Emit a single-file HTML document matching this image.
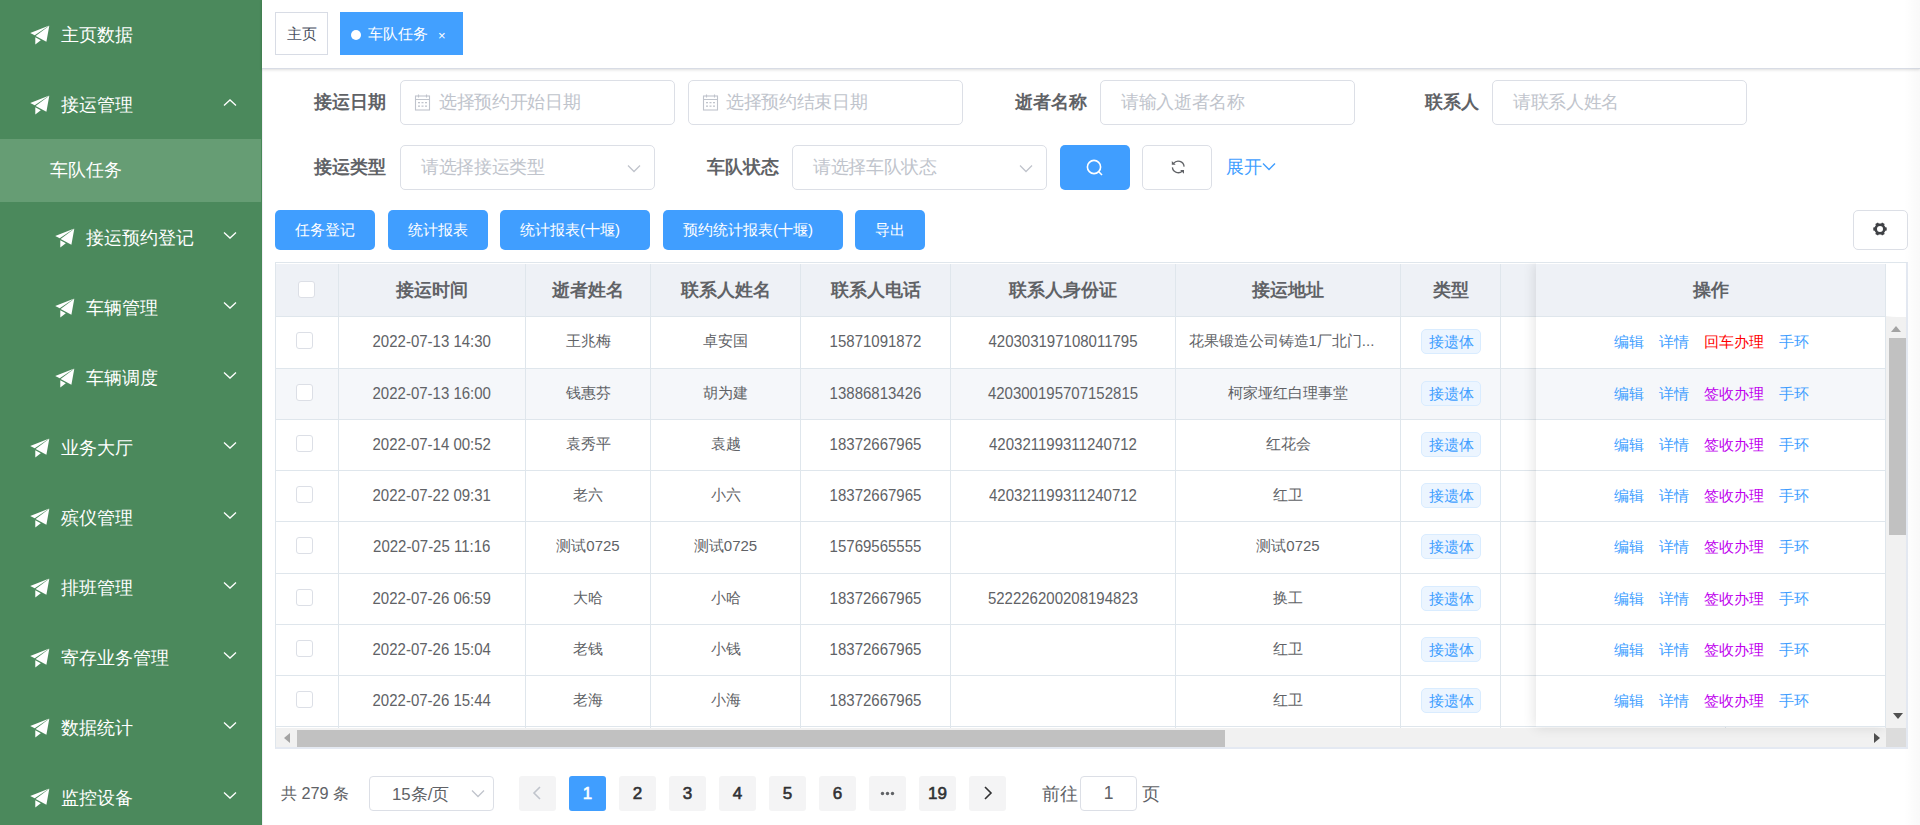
<!DOCTYPE html>
<html><head><meta charset="utf-8">
<style>
*{box-sizing:border-box;margin:0;padding:0}
html,body{width:1920px;height:825px;overflow:hidden;background:#fff;font-family:"Liberation Sans",sans-serif;color:#606266}
.abs{position:absolute}
#side{position:absolute;left:0;top:0;width:262px;height:825px;background:#4b895c}
.mi{position:absolute;left:0;width:262px;height:70px;color:#fff;font-size:17.5px;line-height:70px}
.mi svg.pl{position:absolute;top:25px}
.mi .t{position:absolute;top:0}
.mi svg.ch{position:absolute;left:223px;top:28.5px}
#sub{position:absolute;left:0;top:139px;width:261px;height:62.5px;background:#669d74;color:#fff;font-size:17.5px;line-height:62.5px}
#hdr{position:absolute;left:262px;top:0;width:1658px;height:69px;background:#fff;border-bottom:1px solid #d8dce5;box-shadow:0 1px 3px 0 rgba(0,0,0,.12),0 0 3px 0 rgba(0,0,0,.04);z-index:2}
.tag{position:absolute;top:12px;height:43px;font-size:15px;line-height:41px}
.lbl{position:absolute;font-size:17.5px;font-weight:bold;color:#606266;line-height:45px;height:45px;text-align:right;white-space:nowrap}
.inp{position:absolute;height:45px;border:1px solid #dcdfe6;border-radius:5px;background:#fff;font-size:17.5px;letter-spacing:-0.35px;color:#c0c4cc;line-height:43px;white-space:nowrap}
.inp span{position:absolute;top:0}
.inp svg{position:absolute}
.btn{position:absolute;top:210px;height:40px;background:#409eff;color:#fff;border-radius:5px;font-size:15px;line-height:40px;text-align:center;white-space:nowrap}
#tbl{position:absolute;left:275px;top:262px;width:1633px;height:487px;border:2px solid #dfe6ec;border-width:1px 2px 2px 1px;border-right-color:#e4e9f2;border-bottom-color:#e4e9f2;overflow:hidden;background:#fff}
.hline{position:absolute;height:1px;background:#dfe6ec}
.vline{position:absolute;width:1px;background:#dfe6ec}
.th{position:absolute;top:1px;height:52px;line-height:52px;font-size:17.5px;font-weight:bold;color:#606266;text-align:center;white-space:nowrap}
.td{position:absolute;font-size:15px;color:#606266;text-align:center;white-space:nowrap;line-height:20px}
.dt{transform:scaleY(1.12)}
.cb{position:absolute;width:17px;height:17px;border:1px solid #dcdfe6;border-radius:3px;background:#fff}
.etag{position:absolute;width:60px;height:25px;border:1px solid #d9ecff;background:#ecf5ff;color:#409eff;border-radius:5px;font-size:15px;line-height:23px;text-align:center}
.op{position:absolute;font-size:15px;line-height:20px;white-space:nowrap}
.pg{position:absolute;top:776px;width:37px;height:35px;background:#f4f4f5;border-radius:3px;font-size:17px;-webkit-text-stroke:0.6px currentColor;color:#303133;text-align:center;line-height:35px}
</style></head><body>
<div id="side">
<div class="mi" style="top:0px"><svg class="pl" style="left:30px" width="20" height="20" viewBox="0 0 20 20"><path fill="#fff" d="M0.2 7.9L19.3 0.4L4.7 10.3ZM19.3 0.7L16.4 16.7L5.6 11ZM5.3 12.3L5.3 19.6L10.8 15.2Z"/></svg><span class="t" style="left:61px">主页数据</span></div>
<div class="mi" style="top:70px"><svg class="pl" style="left:30px" width="20" height="20" viewBox="0 0 20 20"><path fill="#fff" d="M0.2 7.9L19.3 0.4L4.7 10.3ZM19.3 0.7L16.4 16.7L5.6 11ZM5.3 12.3L5.3 19.6L10.8 15.2Z"/></svg><span class="t" style="left:61px">接运管理</span><svg class="ch" width="14" height="8" viewBox="0 0 14 8"><path d="M1 6.5L7 1L13 6.5" fill="none" stroke="#fff" stroke-width="1.3"/></svg></div>
<div id="sub"><span class="abs" style="left:50px">车队任务</span></div>
<div class="mi" style="top:202.5px"><svg class="pl" style="left:55px" width="20" height="20" viewBox="0 0 20 20"><path fill="#fff" d="M0.2 7.9L19.3 0.4L4.7 10.3ZM19.3 0.7L16.4 16.7L5.6 11ZM5.3 12.3L5.3 19.6L10.8 15.2Z"/></svg><span class="t" style="left:86px">接运预约登记</span><svg class="ch" width="14" height="8" viewBox="0 0 14 8"><path d="M1 1.5L7 7L13 1.5" fill="none" stroke="#fff" stroke-width="1.3"/></svg></div>
<div class="mi" style="top:272.5px"><svg class="pl" style="left:55px" width="20" height="20" viewBox="0 0 20 20"><path fill="#fff" d="M0.2 7.9L19.3 0.4L4.7 10.3ZM19.3 0.7L16.4 16.7L5.6 11ZM5.3 12.3L5.3 19.6L10.8 15.2Z"/></svg><span class="t" style="left:86px">车辆管理</span><svg class="ch" width="14" height="8" viewBox="0 0 14 8"><path d="M1 1.5L7 7L13 1.5" fill="none" stroke="#fff" stroke-width="1.3"/></svg></div>
<div class="mi" style="top:342.5px"><svg class="pl" style="left:55px" width="20" height="20" viewBox="0 0 20 20"><path fill="#fff" d="M0.2 7.9L19.3 0.4L4.7 10.3ZM19.3 0.7L16.4 16.7L5.6 11ZM5.3 12.3L5.3 19.6L10.8 15.2Z"/></svg><span class="t" style="left:86px">车辆调度</span><svg class="ch" width="14" height="8" viewBox="0 0 14 8"><path d="M1 1.5L7 7L13 1.5" fill="none" stroke="#fff" stroke-width="1.3"/></svg></div>
<div class="mi" style="top:412.5px"><svg class="pl" style="left:30px" width="20" height="20" viewBox="0 0 20 20"><path fill="#fff" d="M0.2 7.9L19.3 0.4L4.7 10.3ZM19.3 0.7L16.4 16.7L5.6 11ZM5.3 12.3L5.3 19.6L10.8 15.2Z"/></svg><span class="t" style="left:61px">业务大厅</span><svg class="ch" width="14" height="8" viewBox="0 0 14 8"><path d="M1 1.5L7 7L13 1.5" fill="none" stroke="#fff" stroke-width="1.3"/></svg></div>
<div class="mi" style="top:482.5px"><svg class="pl" style="left:30px" width="20" height="20" viewBox="0 0 20 20"><path fill="#fff" d="M0.2 7.9L19.3 0.4L4.7 10.3ZM19.3 0.7L16.4 16.7L5.6 11ZM5.3 12.3L5.3 19.6L10.8 15.2Z"/></svg><span class="t" style="left:61px">殡仪管理</span><svg class="ch" width="14" height="8" viewBox="0 0 14 8"><path d="M1 1.5L7 7L13 1.5" fill="none" stroke="#fff" stroke-width="1.3"/></svg></div>
<div class="mi" style="top:552.5px"><svg class="pl" style="left:30px" width="20" height="20" viewBox="0 0 20 20"><path fill="#fff" d="M0.2 7.9L19.3 0.4L4.7 10.3ZM19.3 0.7L16.4 16.7L5.6 11ZM5.3 12.3L5.3 19.6L10.8 15.2Z"/></svg><span class="t" style="left:61px">排班管理</span><svg class="ch" width="14" height="8" viewBox="0 0 14 8"><path d="M1 1.5L7 7L13 1.5" fill="none" stroke="#fff" stroke-width="1.3"/></svg></div>
<div class="mi" style="top:622.5px"><svg class="pl" style="left:30px" width="20" height="20" viewBox="0 0 20 20"><path fill="#fff" d="M0.2 7.9L19.3 0.4L4.7 10.3ZM19.3 0.7L16.4 16.7L5.6 11ZM5.3 12.3L5.3 19.6L10.8 15.2Z"/></svg><span class="t" style="left:61px">寄存业务管理</span><svg class="ch" width="14" height="8" viewBox="0 0 14 8"><path d="M1 1.5L7 7L13 1.5" fill="none" stroke="#fff" stroke-width="1.3"/></svg></div>
<div class="mi" style="top:692.5px"><svg class="pl" style="left:30px" width="20" height="20" viewBox="0 0 20 20"><path fill="#fff" d="M0.2 7.9L19.3 0.4L4.7 10.3ZM19.3 0.7L16.4 16.7L5.6 11ZM5.3 12.3L5.3 19.6L10.8 15.2Z"/></svg><span class="t" style="left:61px">数据统计</span><svg class="ch" width="14" height="8" viewBox="0 0 14 8"><path d="M1 1.5L7 7L13 1.5" fill="none" stroke="#fff" stroke-width="1.3"/></svg></div>
<div class="mi" style="top:762.5px"><svg class="pl" style="left:30px" width="20" height="20" viewBox="0 0 20 20"><path fill="#fff" d="M0.2 7.9L19.3 0.4L4.7 10.3ZM19.3 0.7L16.4 16.7L5.6 11ZM5.3 12.3L5.3 19.6L10.8 15.2Z"/></svg><span class="t" style="left:61px">监控设备</span><svg class="ch" width="14" height="8" viewBox="0 0 14 8"><path d="M1 1.5L7 7L13 1.5" fill="none" stroke="#fff" stroke-width="1.3"/></svg></div>
<div class="abs" style="left:261px;top:0;width:1px;height:825px;background:#478857"></div>
</div>
<div id="hdr">
<div class="tag" style="left:13px;width:53px;border:1px solid #d8dce5;color:#495060;text-align:center">主页</div>
<div class="tag" style="left:78px;width:123px;background:#42a0ff;color:#fff"><span class="abs" style="left:11px;top:18px;width:10px;height:10px;border-radius:50%;background:#fff"></span><span class="abs" style="left:28px;top:0;line-height:43px">车队任务</span><span class="abs" style="left:98px;top:2px;line-height:43px;font-size:13px">×</span></div>
</div>
<div class="lbl" style="left:286px;top:80px;width:100px">接运日期</div>
<div class="inp" style="left:400px;top:80px;width:275px"><svg style="left:13px;top:13px" width="17" height="17" viewBox="0 0 17 17"><g fill="none" stroke="#c0c4cc" stroke-width="1.1"><rect x="1.5" y="2" width="14" height="14"/><path d="M1.5 5.5H15.5M4.5 0.5V3.5M12.5 0.5V3.5"/></g><g fill="#c0c4cc"><rect x="4" y="8" width="2" height="1.3"/><rect x="7.5" y="8" width="2" height="1.3"/><rect x="11" y="8" width="2" height="1.3"/><rect x="4" y="11.5" width="2" height="1.3"/><rect x="7.5" y="11.5" width="2" height="1.3"/><rect x="11" y="11.5" width="2" height="1.3"/></g></svg><span style="left:38px">选择预约开始日期</span></div>
<div class="inp" style="left:688px;top:80px;width:275px"><svg style="left:13px;top:13px" width="17" height="17" viewBox="0 0 17 17"><g fill="none" stroke="#c0c4cc" stroke-width="1.1"><rect x="1.5" y="2" width="14" height="14"/><path d="M1.5 5.5H15.5M4.5 0.5V3.5M12.5 0.5V3.5"/></g><g fill="#c0c4cc"><rect x="4" y="8" width="2" height="1.3"/><rect x="7.5" y="8" width="2" height="1.3"/><rect x="11" y="8" width="2" height="1.3"/><rect x="4" y="11.5" width="2" height="1.3"/><rect x="7.5" y="11.5" width="2" height="1.3"/><rect x="11" y="11.5" width="2" height="1.3"/></g></svg><span style="left:37px">选择预约结束日期</span></div>
<div class="lbl" style="left:986.5px;top:80px;width:100px">逝者名称</div>
<div class="inp" style="left:1100px;top:80px;width:255px"><span style="left:20px">请输入逝者名称</span></div>
<div class="lbl" style="left:1378.5px;top:80px;width:100px">联系人</div>
<div class="inp" style="left:1492px;top:80px;width:255px"><span style="left:20px">请联系人姓名</span></div>
<div class="lbl" style="left:286px;top:145px;width:100px">接运类型</div>
<div class="inp" style="left:400px;top:145px;width:255px"><span style="left:20px">请选择接运类型</span><svg style="left:226px;top:18px" width="14" height="9" viewBox="0 0 14 9"><path d="M1 1.5L7 7.5L13 1.5" fill="none" stroke="#c0c4cc" stroke-width="1.3"/></svg></div>
<div class="lbl" style="left:679px;top:145px;width:100px">车队状态</div>
<div class="inp" style="left:792px;top:145px;width:255px"><span style="left:20px">请选择车队状态</span><svg style="left:226px;top:18px" width="14" height="9" viewBox="0 0 14 9"><path d="M1 1.5L7 7.5L13 1.5" fill="none" stroke="#c0c4cc" stroke-width="1.3"/></svg></div>
<div class="abs" style="left:1060px;top:145px;width:70px;height:45px;background:#409eff;border-radius:5px"><svg class="abs" style="left:26px;top:14px" width="18" height="18" viewBox="0 0 18 18"><circle cx="8" cy="8" r="6.6" fill="none" stroke="#fff" stroke-width="1.6"/><path d="M12.8 12.8L16 16" stroke="#fff" stroke-width="1.6"/></svg></div>
<div class="abs" style="left:1142px;top:145px;width:70px;height:45px;border:1px solid #dcdfe6;border-radius:5px;background:#fff"><svg class="abs" style="left:27.5px;top:14px" width="15" height="15" viewBox="0 0 15 15"><g fill="none" stroke="#606266" stroke-width="1.3"><path d="M2.6 3.4A5.9 5.9 0 0 1 13.1 6.6"/><path d="M1.4 7.4A5.9 5.9 0 0 0 11.4 11"/></g><path d="M0.8 0.9V4.8H4.7Z" fill="#606266"/><path d="M9.1 10H13V13.8Z" fill="#606266"/></svg></div>
<div class="abs" style="left:1226px;top:145px;height:45px;line-height:45px;font-size:17.5px;color:#409eff;white-space:nowrap">展开<svg style="vertical-align:middle;margin-left:0px;margin-top:-3px" width="14" height="9" viewBox="0 0 14 9"><path d="M1 1.5L7 7.5L13 1.5" fill="none" stroke="#409eff" stroke-width="1.4"/></svg></div>
<div class="btn" style="left:275px;width:100px;padding-right:0px">任务登记</div>
<div class="btn" style="left:388px;width:100px;padding-right:0px">统计报表</div>
<div class="btn" style="left:500px;width:150px;padding-right:10px">统计报表(十堰)</div>
<div class="btn" style="left:663px;width:180px;padding-right:10px">预约统计报表(十堰)</div>
<div class="btn" style="left:855px;width:70px;padding-right:0px">导出</div>
<div class="abs" style="left:1853px;top:210px;width:55px;height:40px;border:1px solid #dcdfe6;border-radius:5px;background:#fff"><svg class="abs" style="left:19px;top:11px" width="14" height="14" viewBox="0 0 14 14"><path fill="#404246" fill-rule="evenodd" d="M11.85 4.20L12.36 5.36L13.72 5.45L13.72 8.55L12.36 8.64L11.85 9.80L11.10 10.82L11.71 12.05L9.02 13.60L8.26 12.46L7.00 12.60L5.74 12.46L4.98 13.60L2.29 12.05L2.90 10.82L2.15 9.80L1.64 8.64L0.28 8.55L0.28 5.45L1.64 5.36L2.15 4.20L2.90 3.18L2.29 1.95L4.98 0.40L5.74 1.54L7.00 1.40L8.26 1.54L9.02 0.40L11.71 1.95L11.10 3.18ZM10 7A3 3 0 1 0 4 7A3 3 0 1 0 10 7Z"/></svg></div>
<div id="tbl">
<div class="abs" style="left:0;top:1px;width:1610px;height:52px;background:#eef1f6"></div>
<div class="abs" style="left:0;top:106px;width:1610px;height:50px;background:#f5f7fa"></div>
<div class="vline" style="left:62px;top:1px;height:464px"></div>
<div class="vline" style="left:249px;top:1px;height:464px"></div>
<div class="vline" style="left:374px;top:1px;height:464px"></div>
<div class="vline" style="left:524px;top:1px;height:464px"></div>
<div class="vline" style="left:674px;top:1px;height:464px"></div>
<div class="vline" style="left:899px;top:1px;height:464px"></div>
<div class="vline" style="left:1124px;top:1px;height:464px"></div>
<div class="vline" style="left:1224px;top:1px;height:464px"></div>
<div class="vline" style="left:1449px;top:1px;height:464px"></div>
<div class="hline" style="left:0;top:53px;width:1610px"></div>
<div class="hline" style="left:0;top:105px;width:1610px"></div>
<div class="hline" style="left:0;top:156px;width:1610px"></div>
<div class="hline" style="left:0;top:207px;width:1610px"></div>
<div class="hline" style="left:0;top:258px;width:1610px"></div>
<div class="hline" style="left:0;top:310px;width:1610px"></div>
<div class="hline" style="left:0;top:361px;width:1610px"></div>
<div class="hline" style="left:0;top:412px;width:1610px"></div>
<div class="hline" style="left:0;top:463px;width:1610px"></div>
<div class="th" style="left:62px;width:187.5px">接运时间</div>
<div class="th" style="left:249.5px;width:125.0px">逝者姓名</div>
<div class="th" style="left:374.5px;width:150.0px">联系人姓名</div>
<div class="th" style="left:524.5px;width:150.0px">联系人电话</div>
<div class="th" style="left:674.5px;width:225.0px">联系人身份证</div>
<div class="th" style="left:899.5px;width:225.0px">接运地址</div>
<div class="th" style="left:1124.5px;width:100.0px">类型</div>
<div class="cb" style="left:22px;top:18px"></div>
<div class="cb" style="left:20px;top:68.5px"></div>
<div class="td dt" style="left:62px;width:187.5px;top:68px">2022-07-13 14:30</div>
<div class="td" style="left:249.5px;width:125.0px;top:68px">王兆梅</div>
<div class="td" style="left:374.5px;width:150.0px;top:68px">卓安国</div>
<div class="td dt" style="left:524.5px;width:150.0px;top:68px">15871091872</div>
<div class="td dt" style="left:674.5px;width:225.0px;top:68px">420303197108011795</div>
<div class="td" style="left:912.5px;top:68px;text-align:left">花果锻造公司铸造1厂北门...</div>
<div class="etag" style="left:1145px;top:65.5px">接遗体</div>
<div class="cb" style="left:20px;top:120.5px"></div>
<div class="td dt" style="left:62px;width:187.5px;top:120px">2022-07-13 16:00</div>
<div class="td" style="left:249.5px;width:125.0px;top:120px">钱惠芬</div>
<div class="td" style="left:374.5px;width:150.0px;top:120px">胡为建</div>
<div class="td dt" style="left:524.5px;width:150.0px;top:120px">13886813426</div>
<div class="td dt" style="left:674.5px;width:225.0px;top:120px">420300195707152815</div>
<div class="td" style="left:899.5px;width:225.0px;top:120px">柯家垭红白理事堂</div>
<div class="etag" style="left:1145px;top:117.5px">接遗体</div>
<div class="cb" style="left:20px;top:171.5px"></div>
<div class="td dt" style="left:62px;width:187.5px;top:171px">2022-07-14 00:52</div>
<div class="td" style="left:249.5px;width:125.0px;top:171px">袁秀平</div>
<div class="td" style="left:374.5px;width:150.0px;top:171px">袁越</div>
<div class="td dt" style="left:524.5px;width:150.0px;top:171px">18372667965</div>
<div class="td dt" style="left:674.5px;width:225.0px;top:171px">420321199311240712</div>
<div class="td" style="left:899.5px;width:225.0px;top:171px">红花会</div>
<div class="etag" style="left:1145px;top:168.5px">接遗体</div>
<div class="cb" style="left:20px;top:222.5px"></div>
<div class="td dt" style="left:62px;width:187.5px;top:222px">2022-07-22 09:31</div>
<div class="td" style="left:249.5px;width:125.0px;top:222px">老六</div>
<div class="td" style="left:374.5px;width:150.0px;top:222px">小六</div>
<div class="td dt" style="left:524.5px;width:150.0px;top:222px">18372667965</div>
<div class="td dt" style="left:674.5px;width:225.0px;top:222px">420321199311240712</div>
<div class="td" style="left:899.5px;width:225.0px;top:222px">红卫</div>
<div class="etag" style="left:1145px;top:219.5px">接遗体</div>
<div class="cb" style="left:20px;top:273.5px"></div>
<div class="td dt" style="left:62px;width:187.5px;top:273px">2022-07-25 11:16</div>
<div class="td" style="left:249.5px;width:125.0px;top:273px">测试0725</div>
<div class="td" style="left:374.5px;width:150.0px;top:273px">测试0725</div>
<div class="td dt" style="left:524.5px;width:150.0px;top:273px">15769565555</div>
<div class="td" style="left:899.5px;width:225.0px;top:273px">测试0725</div>
<div class="etag" style="left:1145px;top:270.5px">接遗体</div>
<div class="cb" style="left:20px;top:325.5px"></div>
<div class="td dt" style="left:62px;width:187.5px;top:325px">2022-07-26 06:59</div>
<div class="td" style="left:249.5px;width:125.0px;top:325px">大哈</div>
<div class="td" style="left:374.5px;width:150.0px;top:325px">小哈</div>
<div class="td dt" style="left:524.5px;width:150.0px;top:325px">18372667965</div>
<div class="td dt" style="left:674.5px;width:225.0px;top:325px">522226200208194823</div>
<div class="td" style="left:899.5px;width:225.0px;top:325px">换工</div>
<div class="etag" style="left:1145px;top:322.5px">接遗体</div>
<div class="cb" style="left:20px;top:376.5px"></div>
<div class="td dt" style="left:62px;width:187.5px;top:376px">2022-07-26 15:04</div>
<div class="td" style="left:249.5px;width:125.0px;top:376px">老钱</div>
<div class="td" style="left:374.5px;width:150.0px;top:376px">小钱</div>
<div class="td dt" style="left:524.5px;width:150.0px;top:376px">18372667965</div>
<div class="td" style="left:899.5px;width:225.0px;top:376px">红卫</div>
<div class="etag" style="left:1145px;top:373.5px">接遗体</div>
<div class="cb" style="left:20px;top:427.5px"></div>
<div class="td dt" style="left:62px;width:187.5px;top:427px">2022-07-26 15:44</div>
<div class="td" style="left:249.5px;width:125.0px;top:427px">老海</div>
<div class="td" style="left:374.5px;width:150.0px;top:427px">小海</div>
<div class="td dt" style="left:524.5px;width:150.0px;top:427px">18372667965</div>
<div class="td" style="left:899.5px;width:225.0px;top:427px">红卫</div>
<div class="etag" style="left:1145px;top:424.5px">接遗体</div>
<div class="abs" style="left:0;top:465px;width:1610px;height:19px;background:#f1f1f1"></div>
<div class="abs" style="left:21px;top:467px;width:928px;height:17px;background:#c1c1c1"></div>
<svg class="abs" style="left:8px;top:470px" width="6" height="10" viewBox="0 0 6 10"><path d="M6 0L0 5L6 10Z" fill="#a3a3a3"/></svg>
<div class="abs" style="left:1259.7px;top:0;width:350px;height:464px;background:#fff;box-shadow:-1px 0 12px rgba(0,0,0,.12)"></div>
<div class="abs" style="left:1259.7px;top:0;width:350px;height:464px;background:#fff;overflow:hidden">
<div class="abs" style="left:0;top:1px;width:350px;height:52px;background:#eef1f6"></div>
<div class="abs" style="left:0;top:106px;width:350px;height:50px;background:#f5f7fa"></div>
<div class="hline" style="left:0;top:53px;width:350px"></div>
<div class="hline" style="left:0;top:105px;width:350px"></div>
<div class="hline" style="left:0;top:156px;width:350px"></div>
<div class="hline" style="left:0;top:207px;width:350px"></div>
<div class="hline" style="left:0;top:258px;width:350px"></div>
<div class="hline" style="left:0;top:310px;width:350px"></div>
<div class="hline" style="left:0;top:361px;width:350px"></div>
<div class="hline" style="left:0;top:412px;width:350px"></div>
<div class="hline" style="left:0;top:463px;width:350px"></div>
<div class="th" style="left:0;width:350px">操作</div>
<div class="op" style="left:78.05px;top:69px;color:#409eff">编辑</div>
<div class="op" style="left:123.05px;top:69px;color:#409eff">详情</div>
<div class="op" style="left:168.05px;top:69px;color:#f00">回车办理</div>
<div class="op" style="left:243.05px;top:69px;color:#409eff">手环</div>
<div class="op" style="left:78.05px;top:121px;color:#409eff">编辑</div>
<div class="op" style="left:123.05px;top:121px;color:#409eff">详情</div>
<div class="op" style="left:168.05px;top:121px;color:#c000ee">签收办理</div>
<div class="op" style="left:243.05px;top:121px;color:#409eff">手环</div>
<div class="op" style="left:78.05px;top:172px;color:#409eff">编辑</div>
<div class="op" style="left:123.05px;top:172px;color:#409eff">详情</div>
<div class="op" style="left:168.05px;top:172px;color:#c000ee">签收办理</div>
<div class="op" style="left:243.05px;top:172px;color:#409eff">手环</div>
<div class="op" style="left:78.05px;top:223px;color:#409eff">编辑</div>
<div class="op" style="left:123.05px;top:223px;color:#409eff">详情</div>
<div class="op" style="left:168.05px;top:223px;color:#c000ee">签收办理</div>
<div class="op" style="left:243.05px;top:223px;color:#409eff">手环</div>
<div class="op" style="left:78.05px;top:274px;color:#409eff">编辑</div>
<div class="op" style="left:123.05px;top:274px;color:#409eff">详情</div>
<div class="op" style="left:168.05px;top:274px;color:#c000ee">签收办理</div>
<div class="op" style="left:243.05px;top:274px;color:#409eff">手环</div>
<div class="op" style="left:78.05px;top:326px;color:#409eff">编辑</div>
<div class="op" style="left:123.05px;top:326px;color:#409eff">详情</div>
<div class="op" style="left:168.05px;top:326px;color:#c000ee">签收办理</div>
<div class="op" style="left:243.05px;top:326px;color:#409eff">手环</div>
<div class="op" style="left:78.05px;top:377px;color:#409eff">编辑</div>
<div class="op" style="left:123.05px;top:377px;color:#409eff">详情</div>
<div class="op" style="left:168.05px;top:377px;color:#c000ee">签收办理</div>
<div class="op" style="left:243.05px;top:377px;color:#409eff">手环</div>
<div class="op" style="left:78.05px;top:428px;color:#409eff">编辑</div>
<div class="op" style="left:123.05px;top:428px;color:#409eff">详情</div>
<div class="op" style="left:168.05px;top:428px;color:#c000ee">签收办理</div>
<div class="op" style="left:243.05px;top:428px;color:#409eff">手环</div>
</div>
<div class="vline" style="left:1609px;top:1px;height:464px"></div>
<div class="abs" style="left:1610px;top:72px;width:1px;height:12px;background:#8b5a83"></div>
<div class="abs" style="left:1610px;top:123px;width:1px;height:12px;background:#8b5a83"></div>
<div class="abs" style="left:1610px;top:226px;width:1px;height:13px;background:repeating-linear-gradient(#666 0 1px,transparent 1px 2px)"></div>
<div class="abs" style="left:1610px;top:328px;width:1px;height:1px;background:#666"></div>
<div class="abs" style="left:1610px;top:333px;width:1px;height:1px;background:#666"></div>
<div class="abs" style="left:1610px;top:339px;width:1px;height:1px;background:#666"></div>
<div class="abs" style="left:1609.5px;top:0;width:21px;height:53px;background:#fff"></div>
<div class="abs" style="left:1610px;top:54px;width:20px;height:411px;background:#f1f1f1"></div>
<div class="abs" style="left:1613px;top:75px;width:17px;height:197px;background:#c1c1c1"></div>
<svg class="abs" style="left:1615px;top:63px" width="10" height="6" viewBox="0 0 10 6"><path d="M0 6L5 0L10 6Z" fill="#a3a3a3"/></svg>
<svg class="abs" style="left:1616.5px;top:450px" width="10" height="6" viewBox="0 0 10 6"><path d="M0 0L5 6L10 0Z" fill="#505050"/></svg>
<svg class="abs" style="left:1598px;top:470px" width="6" height="10" viewBox="0 0 6 10"><path d="M0 0L6 5L0 10Z" fill="#505050"/></svg>
<div class="abs" style="left:1610px;top:465px;width:20px;height:19px;background:#dcdcdc"></div>
</div>
<div class="abs" style="left:281px;top:776px;height:34px;line-height:34px;font-size:16.25px;color:#606266;white-space:nowrap">共 279 条</div>
<div class="abs" style="left:369px;top:776px;width:125px;height:35px;border:1px solid #dcdfe6;border-radius:4px;line-height:33px;font-size:16.8px;color:#606266;white-space:nowrap"><span class="abs" style="left:22px;top:1px">15条/页</span><svg class="abs" style="left:101px;top:12px" width="14" height="9" viewBox="0 0 14 9"><path d="M1 1.5L7 7.5L13 1.5" fill="none" stroke="#c0c4cc" stroke-width="1.3"/></svg></div>
<div class="pg" style="left:519px"><svg class="abs" style="left:13px;top:10px" width="10" height="14" viewBox="0 0 10 14"><path d="M8 1L2 7L8 13" fill="none" stroke="#c0c4cc" stroke-width="1.6"/></svg></div>
<div class="pg" style="left:569px;background:#409eff;color:#fff;">1</div>
<div class="pg" style="left:619px;">2</div>
<div class="pg" style="left:669px;">3</div>
<div class="pg" style="left:719px;">4</div>
<div class="pg" style="left:769px;">5</div>
<div class="pg" style="left:819px;">6</div>
<div class="pg" style="left:869px;"><svg class="abs" style="left:11px;top:15px" width="16" height="5" viewBox="0 0 16 5"><circle cx="2.5" cy="2.5" r="1.7" fill="#606266"/><circle cx="7.5" cy="2.5" r="1.7" fill="#606266"/><circle cx="12.5" cy="2.5" r="1.7" fill="#606266"/></svg></div>
<div class="pg" style="left:919px;">19</div>
<div class="pg" style="left:969px"><svg class="abs" style="left:14px;top:10px" width="10" height="14" viewBox="0 0 10 14"><path d="M2 1L8 7L2 13" fill="none" stroke="#303133" stroke-width="1.6"/></svg></div>
<div class="abs" style="left:1042px;top:776px;height:34px;line-height:34px;font-size:17.5px;color:#606266;white-space:nowrap;padding-top:1px">前往</div>
<div class="abs" style="left:1080px;top:776px;width:57px;height:35px;border:1px solid #dcdfe6;border-radius:4px;line-height:33px;font-size:17.5px;color:#606266;text-align:center">1</div>
<div class="abs" style="left:1142px;top:776px;height:34px;line-height:34px;font-size:17.5px;color:#606266;white-space:nowrap;padding-top:1px">页</div>
<div class="abs" style="left:262px;top:69px;width:1px;height:756px;background:#f1eff5"></div>
<div class="abs" style="left:1904px;top:0;width:16px;height:825px;background:linear-gradient(90deg,rgba(0,0,0,0),rgba(0,0,0,.025));pointer-events:none;z-index:5"></div>
</body></html>
